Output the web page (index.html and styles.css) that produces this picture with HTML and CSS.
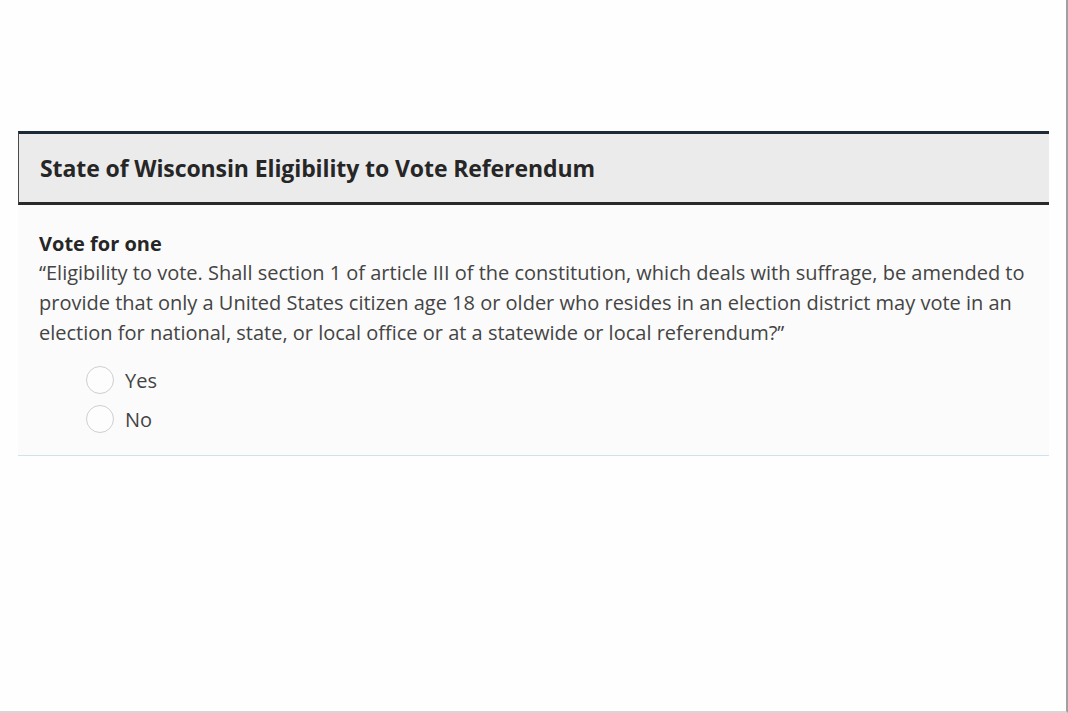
FILE: index.html
```html
<!DOCTYPE html>
<html lang="en">
<head>
<meta charset="utf-8">
<title>State of Wisconsin Eligibility to Vote Referendum</title>
<link rel="stylesheet" href="styles.css">
</head>
<body>
<div class="frame">
  <section class="card">
    <header class="card-head">
      <h1 class="card-title">State of Wisconsin Eligibility to Vote Referendum</h1>
    </header>
    <div class="card-body">
      <div class="instr">Vote for one</div>
      <p class="question">“Eligibility to vote. Shall section 1 of article III of the constitution, which deals with suffrage, be amended to provide that only a United States citizen age 18 or older who resides in an election district may vote in an election for national, state, or local office or at a statewide or local referendum?”</p>
      <div class="options">
        <label class="option"><span class="radio"></span><span class="opt-label">Yes</span></label>
        <label class="option"><span class="radio"></span><span class="opt-label">No</span></label>
      </div>
    </div>
  </section>
</div>
</body>
</html>
```

FILE: styles.css
```css
html, body {
  margin: 0;
  padding: 0;
  background: #ffffff;
}
body {
  font-family: "Open Sans", "Liberation Sans", sans-serif;
  color: #333;
}
.frame {
  box-sizing: border-box;
  width: 1068px;
  height: 713px;
  border-right: 2px solid #a0a0a0;
  border-bottom: 2px solid #d6d6d6;
  padding: 131px 0 0 18px;
  background: #fefefe;
}
.card {
  width: 1031px;
}
.card-head {
  box-sizing: border-box;
  height: 74px;
  background: #ebebeb;
  border-top: 3px solid #1d2a38;
  border-bottom: 3px solid #2a2a2a;
  border-left: 1px solid #4a4a4a;
  display: flex;
  align-items: center;
  padding-left: 21px;
}
.card-title {
  margin: 0;
  font-size: 23px;
  font-weight: 700;
  color: #262626;
  letter-spacing: -0.1px;
}
.card-body {
  background: #fbfbfb;
  padding: 25px 0 22px 21px;
  border-bottom: 1px solid #cfe3ef;
}
.instr {
  font-size: 20px;
  font-weight: 700;
  line-height: 28px;
  color: #262626;
}
.question {
  margin: 0;
  font-size: 20px;
  line-height: 30px;
  color: #444;
  padding-right: 20px;
}
.options {
  margin-top: 18px;
  padding-left: 47px;
  display: flex;
  flex-direction: column;
  gap: 11px;
}
.option {
  display: flex;
  align-items: center;
  gap: 11px;
  height: 28px;
}
.radio {
  box-sizing: border-box;
  width: 28px;
  height: 28px;
  border-radius: 50%;
  border: 1.5px solid #cfcfcf;
  background: #fdfdfd;
}
.opt-label {
  font-size: 20px;
  color: #444;
}
```
